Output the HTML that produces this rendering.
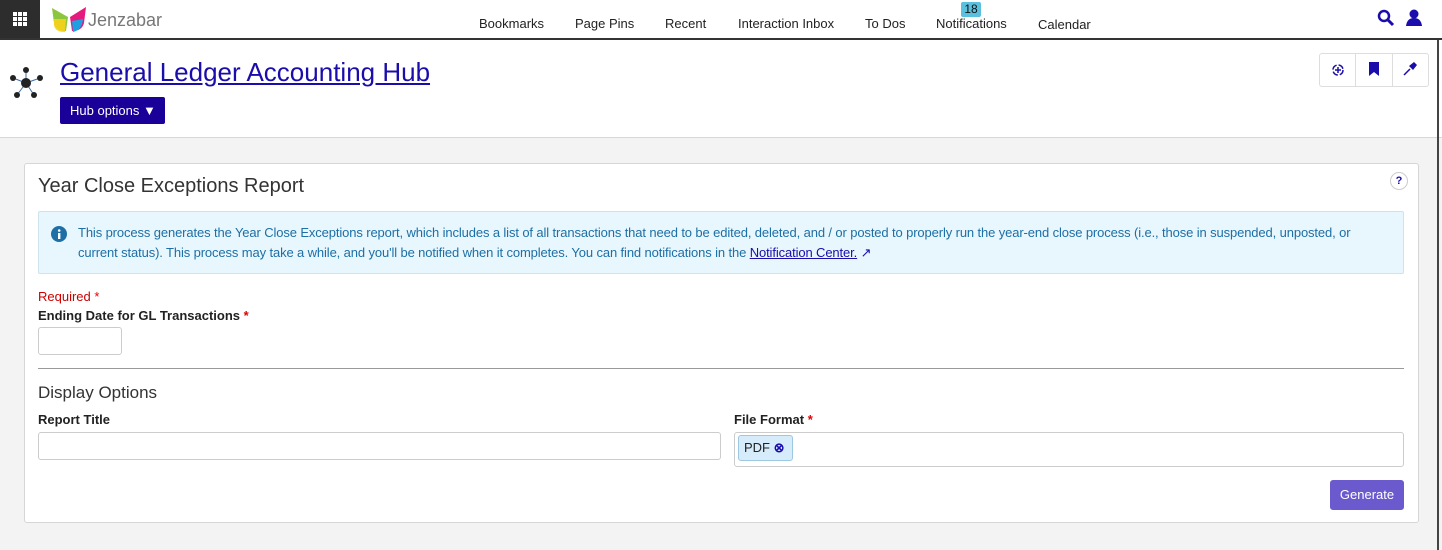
<!DOCTYPE html>
<html><head><style>
*{box-sizing:border-box;margin:0;padding:0}
body{width:1442px;height:550px;overflow:hidden;background:#f3f3f3;font-family:"Liberation Sans",Arial,sans-serif;position:relative;font-size:13px;color:#222}
.abs{position:absolute}
#top{left:0;top:0;width:1442px;height:40px;background:#fff;border-bottom:2px solid #333}
#grid{left:0;top:0;width:40px;height:38px;background:#2d2d2d}
.nav{top:16px;font-size:13px;color:#222}
#hdr{left:0;top:40px;width:1442px;height:98px;background:#fff;border-bottom:1px solid #d8d8d8}
#card{left:24px;top:163px;width:1395px;height:360px;background:#fff;border:1px solid #d6d6d6;border-radius:3px}
.lbl{font-weight:bold;font-size:13px;color:#222}
.inp{background:#fff;border:1px solid #ccc;border-radius:3px}
</style></head><body>
<div id="top" class="abs"></div>
<div id="grid" class="abs">
<svg width="40" height="38"><g fill="#fff">
<rect x="13" y="12" width="4" height="4"/><rect x="18" y="12" width="4" height="4"/><rect x="23" y="12" width="4" height="4"/>
<rect x="13" y="17" width="4" height="4"/><rect x="18" y="17" width="4" height="4"/><rect x="23" y="17" width="4" height="4"/>
<rect x="13" y="22" width="4" height="4"/><rect x="18" y="22" width="4" height="4"/><rect x="23" y="22" width="4" height="4"/></g></svg></div>
<svg class="abs" style="left:50px;top:5px" width="40" height="30">
<path d="M2 3 L18 12 L16 26 Q6 26 4 18Z" fill="#8cc63f"/><path d="M4 14 L16 14 L15 27 Q5 27 4 20Z" fill="#f7d117" opacity=".9"/>
<path d="M36 2 L20 12 L22 26 Q32 26 34 18Z" fill="#e6197d"/><path d="M22 16 L33 14 Q32 25 23 27Z" fill="#1ba1e2"/></svg>
<div class="abs" style="left:88px;top:10px;font-size:18px;color:#777">Jenzabar</div>
<div class="abs nav" style="left:479px">Bookmarks</div>
<div class="abs nav" style="left:575px">Page Pins</div>
<div class="abs nav" style="left:665px">Recent</div>
<div class="abs nav" style="left:738px">Interaction Inbox</div>
<div class="abs nav" style="left:865px">To Dos</div>
<div class="abs nav" style="left:936px">Notifications</div>
<div class="abs" style="left:961px;top:2px;width:20px;height:15px;background:#5bc0de;color:#111;font-size:12px;text-align:center;line-height:15px;border-radius:2px">18</div>
<div class="abs nav" style="left:1038px;top:17px">Calendar</div>
<svg class="abs" style="left:1377px;top:9px" width="18" height="18"><circle cx="7" cy="7" r="5" fill="none" stroke="#1a0dab" stroke-width="2.5"/><path d="M11 11 L16 16" stroke="#1a0dab" stroke-width="3"/></svg>
<svg class="abs" style="left:1405px;top:9px" width="18" height="18"><circle cx="9" cy="5" r="4.5" fill="#1a0dab"/><path d="M1 17 Q2 9 9 9 Q16 9 17 17Z" fill="#1a0dab"/></svg>
<div id="hdr" class="abs"></div>
<svg class="abs" style="left:7px;top:65px" width="38" height="38"><g stroke="#3b6ea5" stroke-width="1"><path d="M19 18 L19 5 M19 18 L6 13 M19 18 L33 13 M19 18 L10 30 M19 18 L27 30"/></g>
<g fill="#222"><circle cx="19" cy="18" r="5"/><circle cx="19" cy="5" r="3"/><circle cx="6" cy="13" r="3"/><circle cx="33" cy="13" r="3"/><circle cx="10" cy="30" r="3"/><circle cx="27" cy="30" r="3"/></g></svg>
<div class="abs" style="left:60px;top:57px;font-size:26px;color:#1a0dab;text-decoration:underline">General Ledger Accounting Hub</div>
<div class="abs" style="left:60px;top:97px;width:105px;height:27px;background:#1a0099;border-radius:2px;color:#fff;font-size:13px;line-height:27px;padding-left:10px">Hub options ▼</div>
<div class="abs" style="left:1319px;top:53px;width:110px;height:34px;border:1px solid #ddd;border-radius:3px;background:#fff"></div>
<div class="abs" style="left:1355px;top:53px;width:1px;height:34px;background:#ddd"></div>
<div class="abs" style="left:1392px;top:53px;width:1px;height:34px;background:#ddd"></div>
<svg class="abs" style="left:1330px;top:62px" width="16" height="16"><circle cx="8" cy="8" r="5" fill="none" stroke="#1a0dab" stroke-width="1.5" stroke-dasharray="6 2"/><path d="M8 5v6M5 8h6" stroke="#1a0dab" stroke-width="1.5"/></svg>
<svg class="abs" style="left:1368px;top:62px" width="12" height="14"><path d="M1 0h10v14l-5-4-5 4z" fill="#1a0dab"/></svg>
<svg class="abs" style="left:1403px;top:61px" width="15" height="15"><path d="M1 14 L7 8" stroke="#1a0dab" stroke-width="1.5"/><path d="M6 5 L10 9 L14 4 L11 1Z" fill="#1a0dab"/></svg>
<div class="abs" style="left:1437px;top:40px;width:2px;height:510px;background:#444"></div>
<div id="card" class="abs"></div>
<div class="abs" style="left:38px;top:175px;font-size:20px;color:#333">Year Close Exceptions Report</div>
<div class="abs" style="left:1390px;top:172px;width:18px;height:18px;border:1px solid #ccc;border-radius:50%;font-size:11px;text-align:center;line-height:16px;color:#1a0dab;font-weight:bold">?</div>
<div class="abs" style="left:38px;top:211px;width:1366px;height:63px;background:#e8f6fd;border:1px solid #cfe3ec;border-radius:2px"></div>
<svg class="abs" style="left:51px;top:226px" width="16" height="16"><circle cx="8" cy="8" r="8" fill="#1d6fa5"/><rect x="7" y="7" width="2.4" height="6" fill="#fff"/><circle cx="8.2" cy="4.5" r="1.3" fill="#fff"/></svg>
<div class="abs" style="left:78px;top:223px;width:1310px;font-size:13px;letter-spacing:-0.12px;line-height:20px;color:#1d6fa5">This process generates the Year Close Exceptions report, which includes a list of all transactions that need to be edited, deleted, and / or posted to properly run the year-end close process (i.e., those in suspended, unposted, or current status). This process may take a while, and you'll be notified when it completes. You can find notifications in the <span style="color:#1a0dab;text-decoration:underline">Notification Center.</span> <span style="color:#1a0dab">↗</span></div>
<div class="abs" style="left:38px;top:289px;color:#c00;font-size:13px">Required <span style="color:#d00">*</span></div>
<div class="abs lbl" style="left:38px;top:308px">Ending Date for GL Transactions <span style="color:#d00">*</span></div>
<div class="abs inp" style="left:38px;top:327px;width:84px;height:28px"></div>
<div class="abs" style="left:38px;top:368px;width:1366px;height:1px;background:#999"></div>
<div class="abs" style="left:38px;top:383px;font-size:17px;color:#333">Display Options</div>
<div class="abs lbl" style="left:38px;top:412px">Report Title</div>
<div class="abs inp" style="left:38px;top:432px;width:683px;height:28px"></div>
<div class="abs lbl" style="left:734px;top:412px">File Format <span style="color:#d00">*</span></div>
<div class="abs inp" style="left:734px;top:432px;width:670px;height:35px"></div>
<div class="abs" style="left:738px;top:435px;width:55px;height:26px;background:#d6ecfb;border:1px solid #9ec7e0;border-radius:3px;font-size:13px;line-height:24px;padding-left:5px">PDF <span style="color:#1a0dab;font-weight:bold">⊗</span></div>
<div class="abs" style="left:1330px;top:480px;width:74px;height:30px;background:#6a5acd;border-radius:3px;color:#fff;font-size:13px;text-align:center;line-height:30px">Generate</div>
</body></html>
